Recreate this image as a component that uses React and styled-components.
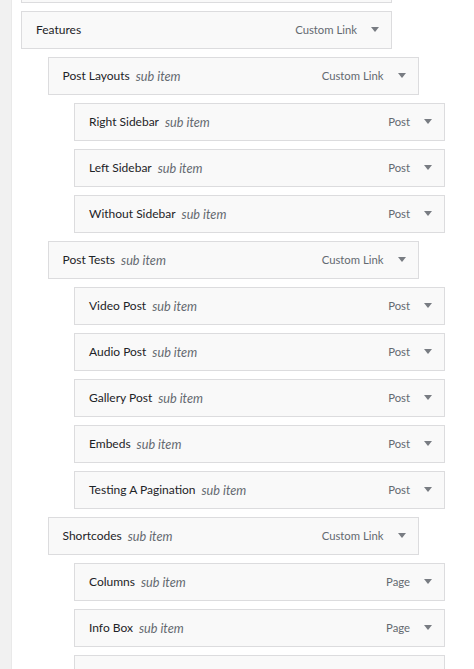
import React from 'react'
import styled, { createGlobalStyle } from 'styled-components'

const GlobalStyle = createGlobalStyle`
  html, body {
    margin: 0;
    padding: 0;
    background: #fff;
    overflow: hidden;
  }
  body {
    font-family: Lato, "Open Sans", sans-serif;
    font-size: 12px;
  }
`

const items = [
  { title: 'Home', type: 'Custom Link', depth: 0, sub: false },
  { title: 'Features', type: 'Custom Link', depth: 0, sub: false },
  { title: 'Post Layouts', type: 'Custom Link', depth: 1, sub: true },
  { title: 'Right Sidebar', type: 'Post', depth: 2, sub: true },
  { title: 'Left Sidebar', type: 'Post', depth: 2, sub: true },
  { title: 'Without Sidebar', type: 'Post', depth: 2, sub: true },
  { title: 'Post Tests', type: 'Custom Link', depth: 1, sub: true },
  { title: 'Video Post', type: 'Post', depth: 2, sub: true },
  { title: 'Audio Post', type: 'Post', depth: 2, sub: true },
  { title: 'Gallery Post', type: 'Post', depth: 2, sub: true },
  { title: 'Embeds', type: 'Post', depth: 2, sub: true },
  { title: 'Testing A Pagination', type: 'Post', depth: 2, sub: true },
  { title: 'Shortcodes', type: 'Custom Link', depth: 1, sub: true },
  { title: 'Columns', type: 'Page', depth: 2, sub: true },
  { title: 'Info Box', type: 'Page', depth: 2, sub: true },
  { title: 'Tabs', type: 'Page', depth: 2, sub: true },
]

const Page = styled.div`
  display: flex;
  align-items: flex-start;
  height: 669px;
`

const Strip = styled.div`
  width: 11px;
  height: 100%;
  flex: none;
  background: #f1f1f1;
  border-right: 1px solid #e9e9e9;
`

const Menu = styled.ul`
  list-style: none;
  margin: -35px 0 0;
  padding: 0 0 0 9px;
  display: flex;
  flex-direction: column;
  gap: 8px;
`

const Item = styled.li`
  flex: none;
  margin-left: ${p => p.$depth * 26.5}px;
  width: 371px;
  box-sizing: border-box;
  height: 38px;
  border: 1px solid #dcdcde;
  background: #f9f9f9;
  display: flex;
  align-items: center;
  padding: 0 12px 1px 14px;
`

const Title = styled.span`
  color: #1d2327;
  font-size: 12px;
  white-space: nowrap;
`

const SubLabel = styled.span`
  color: #646970;
  font-style: italic;
  margin-left: 6px;
  font-size: 12.7px;
  white-space: nowrap;
`

const Controls = styled.span`
  margin-left: auto;
  display: flex;
  align-items: center;
  gap: 14px;
`

const Type = styled.span`
  color: #646970;
  font-size: 11.3px;
`

const Arrow = () => (
  <svg width="8" height="5" viewBox="0 0 8 5">
    <polygon points="0,0 8,0 4,5" fill="#787c82" />
  </svg>
)

export default function App() {
  return (
    <Page>
      <GlobalStyle />
      <Strip />
      <Menu>
        {items.map((it, i) => (
          <Item key={i} $depth={it.depth}>
            <Title>{it.title}</Title>
            {it.sub && <SubLabel>sub item</SubLabel>}
            <Controls>
              <Type>{it.type}</Type>
              <Arrow />
            </Controls>
          </Item>
        ))}
      </Menu>
    </Page>
  )
}
